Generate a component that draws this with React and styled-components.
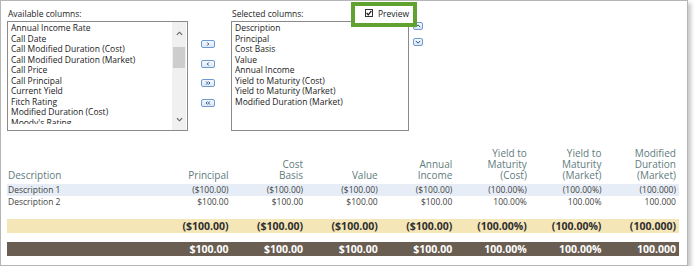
import React from "react";
import styled, { createGlobalStyle } from "styled-components";

const GlobalStyle = createGlobalStyle`
  html, body {
    margin: 0;
    padding: 0;
    background: #fff;
  }
  body {
    font-family: "Open Sans", "Liberation Sans", sans-serif;
  }
`;

const Frame = styled.div`
  position: relative;
  box-sizing: border-box;
  width: 688px;
  height: 266px;
  border: 1px solid #b5b5b5;
  box-shadow: 3px 3px 4px rgba(0, 0, 0, 0.22);
  padding: 0 6px;
  background: #fff;
`;

const TopSection = styled.div`
  display: flex;
  padding-top: 6px;
`;

const Picker = styled.div`
  display: flex;
  flex-direction: column;
  margin-left: ${props => props.offset || 0}px;
`;

const Label = styled.div`
  height: 14px;
  line-height: 14px;
  font-size: 8.5px;
  color: #1e1e1e;
  padding-left: 1px;
`;

const ListBox = styled.div`
  display: flex;
  align-items: flex-start;
  box-sizing: border-box;
  width: ${props => props.width}px;
  height: 110px;
  border: 1px solid #8a8a8a;
  overflow: hidden;
  background: #fff;
`;

const Items = styled.div`
  flex: 1;
  box-sizing: border-box;
  height: 102px;
  overflow: hidden;
  padding: 1px 3px 0;
`;

const Item = styled.div`
  font-size: 8.5px;
  line-height: 10.5px;
  height: 10.5px;
  color: #1a1a1a;
  white-space: nowrap;
`;

const ScrollBar = styled.div`
  display: flex;
  flex-direction: column;
  align-self: stretch;
  width: 14px;
  margin-right: 1px;
  background: #f0f0f0;
`;

const ScrollArrow = styled.div`
  display: flex;
  align-items: center;
  justify-content: center;
  height: 22px;
`;

const Track = styled.div`
  flex: 1;
  padding-top: 3px;
`;

const Thumb = styled.div`
  height: 21px;
  margin: 0 1px;
  background: #cdcdcd;
`;

const ButtonStack = styled.div`
  display: flex;
  flex-direction: column;
  gap: ${props => props.gap}px;
  padding-top: ${props => props.top}px;
  margin-left: ${props => props.offset}px;
`;

const MoveButton = styled.div`
  display: flex;
  align-items: center;
  justify-content: center;
  box-sizing: border-box;
  width: ${props => props.w || 14}px;
  height: 8px;
  border: 1px solid #6f9ad0;
  border-radius: 2px;
  background: linear-gradient(#f4f8fd, #dce8f6);
`;

const PreviewBox = styled.div`
  position: absolute;
  left: 350px;
  top: 1px;
  box-sizing: border-box;
  width: 66px;
  height: 25px;
  border: 4px solid #5fa22f;
  display: flex;
  align-items: flex-start;
  gap: 5px;
  padding: 3px 0 0 10px;
  background: #fff;
`;

const CheckBox = styled.div`
  display: flex;
  align-items: center;
  justify-content: center;
  box-sizing: border-box;
  width: 8px;
  height: 8px;
  border: 1px solid #333;
  background: #fff;
`;

const PreviewText = styled.span`
  font-size: 8.5px;
  line-height: 9px;
  color: #222;
`;

const Table = styled.div`
  width: 672px;
  margin-top: 14px;
`;

const Row = styled.div`
  display: grid;
  grid-template-columns: 150px repeat(7, 1fr);
  align-items: ${props => props.head ? "end" : "center"};
  height: ${props => props.h}px;
  margin-top: ${props => props.gapTop || 0}px;
  background: ${props => props.bg || "transparent"};
  color: ${props => props.color || "#444"};
  font-size: ${props => props.size}px;
  font-weight: ${props => props.bold ? 700 : 400};
`;

const Cell = styled.div`
  text-align: ${props => props.left ? "left" : "right"};
  padding: ${props => props.left ? "0 0 0 1px" : "0 3px 0 0"};
  line-height: ${props => props.lh}px;
  white-space: nowrap;
`;

const HeadCell = styled(Cell)`
  color: #5f7c7d;
  padding-bottom: 3px;
`;

const Chevron = ({ dir, size = 7, color = "#555" }) => {
  const paths = {
    up: "M1 5 L4 2 L7 5",
    down: "M1 2 L4 5 L7 2",
    right: "M3 1.5 L5 3.5 L3 5.5",
    left: "M5 1.5 L3 3.5 L5 5.5",
    rr: "M1.5 1.5 L3.5 3.5 L1.5 5.5 M4.5 1.5 L6.5 3.5 L4.5 5.5",
    ll: "M3.5 1.5 L1.5 3.5 L3.5 5.5 M6.5 1.5 L4.5 3.5 L6.5 5.5",
  };
  return (
    <svg width={size} height={size} viewBox="0 0 8 7">
      <path d={paths[dir]} fill="none" stroke={color} strokeWidth="1.3" />
    </svg>
  );
};

const available = [
  "Annual Income Rate",
  "Call Date",
  "Call Modified Duration (Cost)",
  "Call Modified Duration (Market)",
  "Call Price",
  "Call Principal",
  "Current Yield",
  "Fitch Rating",
  "Modified Duration (Cost)",
  "Moody's Rating",
];

const selected = [
  "Description",
  "Principal",
  "Cost Basis",
  "Value",
  "Annual Income",
  "Yield to Maturity (Cost)",
  "Yield to Maturity (Market)",
  "Modified Duration (Market)",
];

const headers = [
  ["Description"],
  ["Principal"],
  ["Cost", "Basis"],
  ["Value"],
  ["Annual", "Income"],
  ["Yield to", "Maturity", "(Cost)"],
  ["Yield to", "Maturity", "(Market)"],
  ["Modified", "Duration", "(Market)"],
];

const negative = ["($100.00)", "($100.00)", "($100.00)", "($100.00)", "(100.00%)", "(100.00%)", "(100.000)"];
const positive = ["$100.00", "$100.00", "$100.00", "$100.00", "100.00%", "100.00%", "100.000"];

function DataRow({ label, values, ...rest }) {
  return (
    <Row {...rest}>
      <Cell left lh={rest.h}>{label}</Cell>
      {values.map((v, i) => <Cell key={i} lh={rest.h}>{v}</Cell>)}
    </Row>
  );
}

export default function App() {
  return (
    <>
      <GlobalStyle />
      <Frame>
        <TopSection>
          <Picker>
            <Label>Available columns:</Label>
            <ListBox width={181}>
              <Items>
                {available.map(name => <Item key={name}>{name}</Item>)}
              </Items>
              <ScrollBar>
                <ScrollArrow><Chevron dir="up" color="#606060" /></ScrollArrow>
                <Track><Thumb /></Track>
                <ScrollArrow><Chevron dir="down" color="#606060" /></ScrollArrow>
              </ScrollBar>
            </ListBox>
          </Picker>
          <ButtonStack top={33} gap={11.5} offset={13}>
            <MoveButton><Chevron dir="right" size={6} color="#1d4b8f" /></MoveButton>
            <MoveButton><Chevron dir="left" size={6} color="#1d4b8f" /></MoveButton>
            <MoveButton><Chevron dir="rr" size={6} color="#1d4b8f" /></MoveButton>
            <MoveButton><Chevron dir="ll" size={6} color="#1d4b8f" /></MoveButton>
          </ButtonStack>
          <Picker offset={16}>
            <Label>Selected columns:</Label>
            <ListBox width={178}>
              <Items>
                {selected.map(name => <Item key={name}>{name}</Item>)}
              </Items>
            </ListBox>
          </Picker>
          <ButtonStack top={15} gap={8} offset={4}>
            <MoveButton w={10}><Chevron dir="up" size={6} color="#1d4b8f" /></MoveButton>
            <MoveButton w={10}><Chevron dir="down" size={6} color="#1d4b8f" /></MoveButton>
          </ButtonStack>
        </TopSection>

        <PreviewBox>
          <CheckBox>
            <svg width="6" height="6" viewBox="0 0 6 6">
              <path d="M0.6 3 L2.3 4.8 L5.4 0.8" fill="none" stroke="#111" strokeWidth="1.2" />
            </svg>
          </CheckBox>
          <PreviewText>Preview</PreviewText>
        </PreviewBox>

        <Table>
          <Row head h={39} size={10}>
            {headers.map((lines, i) => (
              <HeadCell key={i} left={i === 0} lh={11}>
                {lines.map((l, j) => <div key={j}>{l}</div>)}
              </HeadCell>
            ))}
          </Row>
          <DataRow label="Description 1" values={negative} h={12} size={8.5} bg="#e6edf6" />
          <DataRow label="Description 2" values={positive} h={12} size={8.5} />
          <DataRow label="" values={negative} h={14} size={10.5} bold gapTop={11} bg="#f4e6b7" color="#2f2f2f" />
          <DataRow label="" values={positive} h={14} size={10.5} bold gapTop={9} bg="#6a5d51" color="#fff" />
        </Table>
      </Frame>
    </>
  );
}
